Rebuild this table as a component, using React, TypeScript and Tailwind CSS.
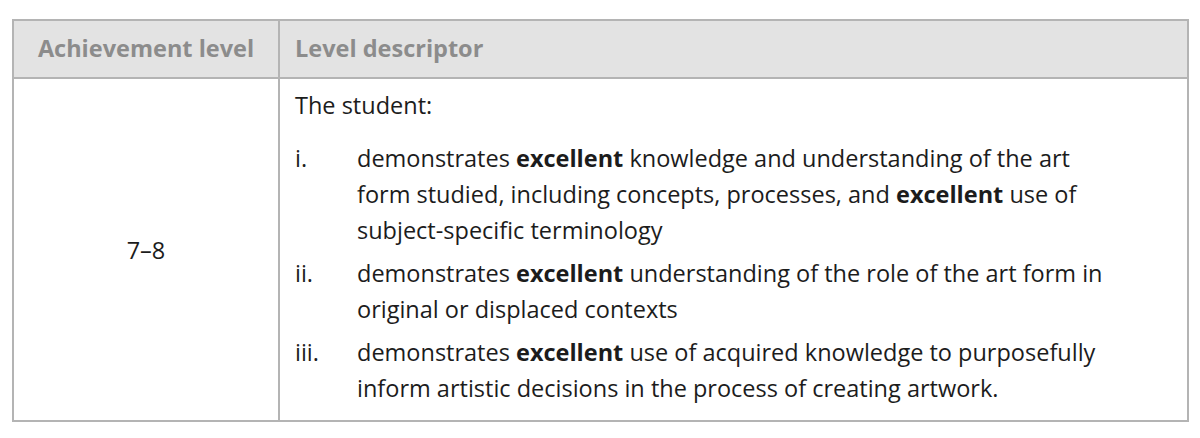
const ITEMS = [
  {
    n: "i.",
    body: (
      <>
        demonstrates <b>excellent</b> knowledge and understanding of the art
        <br />
        form studied, including concepts, processes, and <b>excellent</b> use of
        <br />
        subject-specific terminology
      </>
    ),
  },
  {
    n: "ii.",
    body: (
      <>
        demonstrates <b>excellent</b> understanding of the role of the art form in
        <br />
        original or displaced contexts
      </>
    ),
  },
  {
    n: "iii.",
    body: (
      <>
        demonstrates <b>excellent</b> use of acquired knowledge to purposefully
        <br />
        inform artistic decisions in the process of creating artwork.
      </>
    ),
  },
]

export default function App() {
  return (
    <div className="min-h-[438px] bg-white pl-[12px] pt-[19px] font-['Open_Sans',sans-serif]">
      <div className="w-[1177px] border-2 border-[#b4b4b4]">
        <div className="flex h-[58px] border-b-2 border-[#b4b4b4] bg-[#e3e3e3] text-[23.5px] font-bold text-[#8c8c8c]">
          <div className="flex w-[266px] items-center justify-center border-r-2 border-[#b4b4b4]">Achievement level</div>
          <div className="flex flex-1 items-center px-[15px]">Level descriptor</div>
        </div>
        <div className="flex text-[23.5px] leading-[36px] text-[#1c1c1c]">
          <div className="flex w-[266px] items-center justify-center border-r-2 border-[#b4b4b4]">7–8</div>
          <div className="flex-1 pb-[14px] pl-[15px] pr-[20px] pt-[8px]">
            <p className="mb-[17px]">The student:</p>
            <div className="flex flex-col gap-[7px]">
              {ITEMS.map((item) => (
                <div key={item.n} className="flex">
                  <span className="w-[62px] shrink-0">{item.n}</span>
                  <p className="whitespace-nowrap">{item.body}</p>
                </div>
              ))}
            </div>
          </div>
        </div>
      </div>
    </div>
  )
}
